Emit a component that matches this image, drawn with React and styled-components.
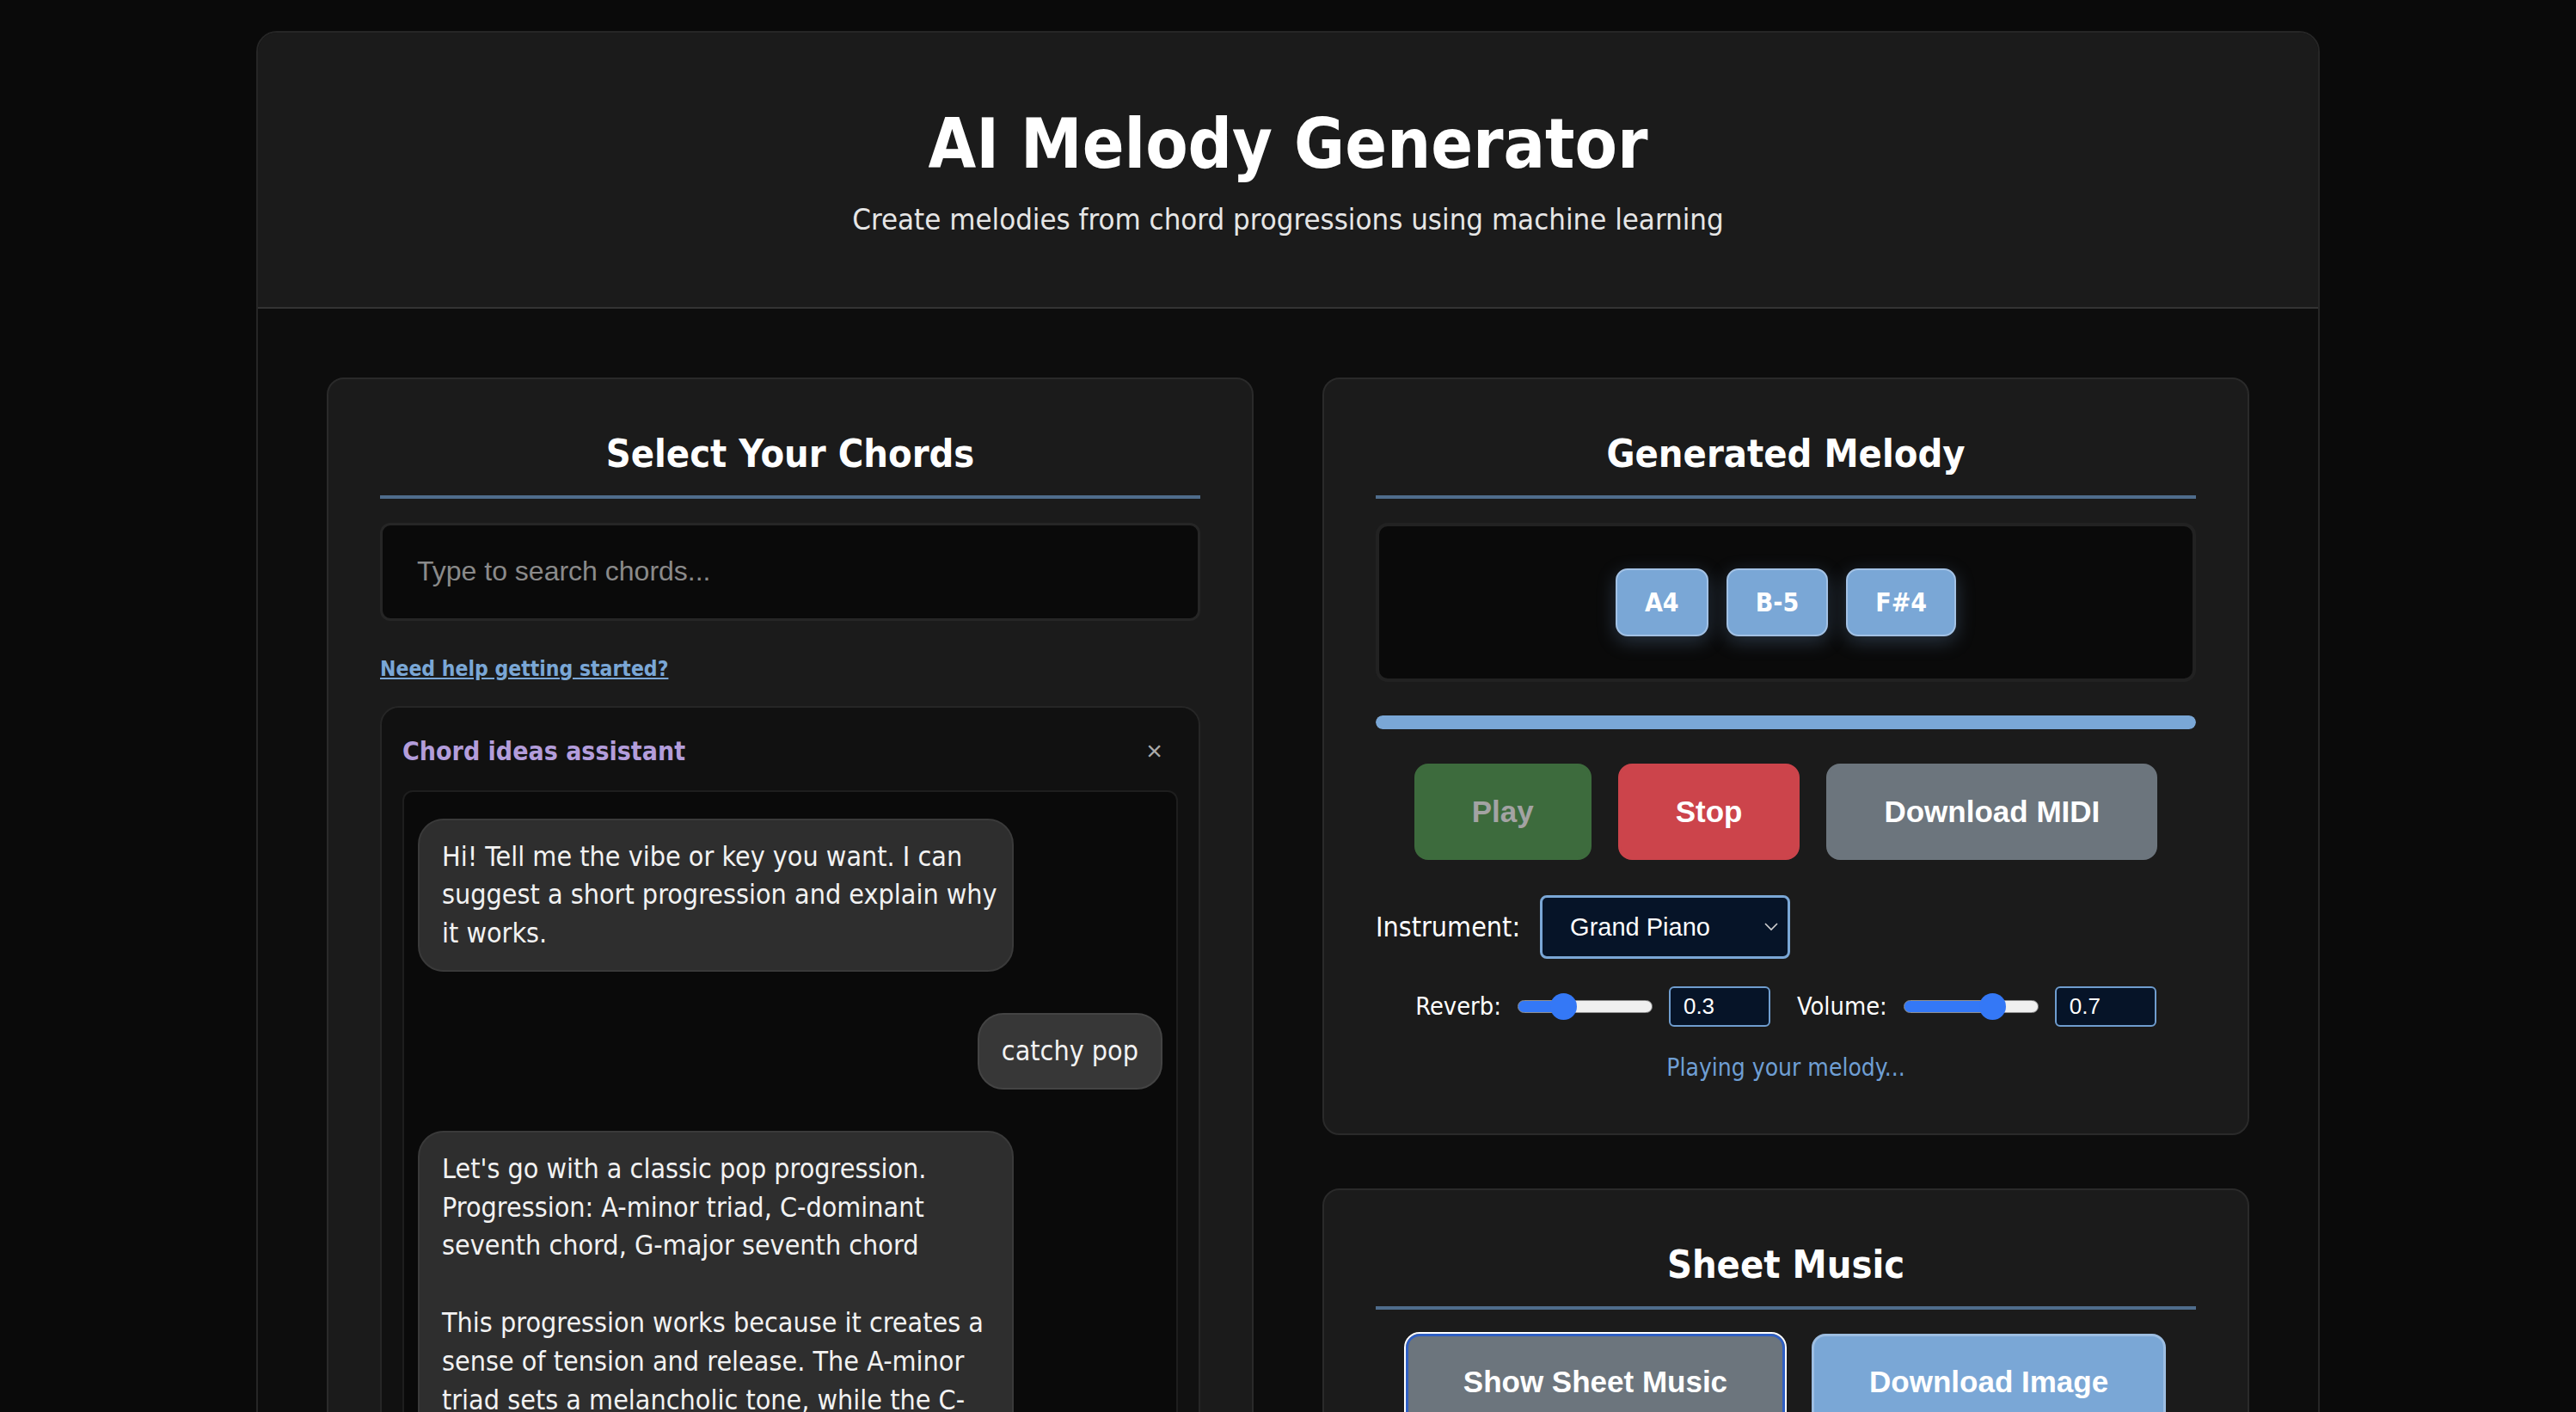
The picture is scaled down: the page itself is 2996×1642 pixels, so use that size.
import React from "react";
import styled, { createGlobalStyle } from "styled-components";

const BODY = `"DejaVu Sans Condensed", "DejaVu Sans", "Liberation Sans", sans-serif`;
const UI = `"Liberation Sans", Arial, sans-serif`;

const Global = createGlobalStyle`
  html, body { margin: 0; padding: 0; background: #0a0a0a; }
  body { font-family: ${BODY}; font-size: 32px; color: #f2f2f2; }
  * { box-sizing: border-box; }
`;

const Page = styled.div`
  padding: 36px 0 80px;
  display: flex;
  justify-content: center;
`;

const Container = styled.div`
  width: 2400px;
  border: 2px solid #262626;
  border-radius: 24px;
  background: #0d0d0d;
  overflow: hidden;
`;

const Header = styled.header`
  background: #1b1b1b;
  border-bottom: 2px solid #333;
  padding: 82px 40px 75px;
  text-align: center;
`;

const Title = styled.h1`
  margin: 0;
  font-size: 80px;
  line-height: 1.2;
  font-weight: 700;
  color: #fff;
`;

const Subtitle = styled.p`
  margin: 14px 0 0;
  font-size: 34.5px;
  line-height: 1.5;
  color: #e6e6e6;
`;

const Main = styled.main`
  display: grid;
  grid-template-columns: 1fr 1fr;
  gap: 80px;
  padding: 80px;
  align-items: start;
`;

const Column = styled.div`
  display: flex;
  flex-direction: column;
  gap: 62px;
`;

const Card = styled.section`
  background: #1b1b1b;
  border: 2px solid #2a2a2a;
  border-radius: 20px;
  padding: 60px 60px 54px;
`;

const CardTitle = styled.h2`
  margin: 0 0 28px;
  padding-bottom: 21px;
  border-bottom: 4px solid #4f6d8c;
  font-size: 44.8px;
  line-height: 1.2;
  font-weight: 700;
  text-align: center;
  color: #fff;
`;

const Search = styled.input`
  display: block;
  width: 100%;
  height: 114px;
  margin-top: 2px;
  padding: 0 40px;
  background: #0a0a0a;
  border: 3px solid #262626;
  border-radius: 12px;
  color: #eee;
  font-family: ${UI};
  font-size: 32px;
  outline: none;
  &::placeholder { color: #8a8a8a; }
`;

const HelpLink = styled.a`
  display: inline-block;
  margin-top: 36px;
  font-size: 24.5px;
  line-height: 1.6;
  font-weight: 700;
  color: #7aa7d6;
  text-decoration: underline;
  cursor: pointer;
`;

const Assistant = styled.div`
  margin-top: 24px;
  background: #111;
  border: 2px solid #262626;
  border-radius: 22px;
  padding: 24px;
`;

const AssistantHead = styled.div`
  height: 54px;
  display: flex;
  align-items: center;
  justify-content: space-between;
  padding-right: 18px;
`;

const AssistantTitle = styled.span`
  font-size: 30px;
  font-weight: 700;
  color: #b39ddb;
`;

const CloseBtn = styled.span`
  font-family: ${UI};
  font-size: 32px;
  color: #aaa;
  cursor: pointer;
`;

const Chat = styled.div`
  margin-top: 18px;
  background: #0a0a0a;
  border: 2px solid #1e1e1e;
  border-radius: 12px;
  padding: 31px 16px;
  display: flex;
  flex-direction: column;
  gap: 48px;
`;

const Bubble = styled.div`
  align-self: ${(p) => (p.$user ? "flex-end" : "flex-start")};
  max-width: 80%;
  padding: ${(p) => (p.$user ? "20px 26px" : "20px 10px 20px 26px")};
  background: ${(p) => (p.$user ? "#373737" : "#2e2e2e")};
  border: 2px solid ${(p) => (p.$user ? "#444" : "#3a3a3a")};
  border-radius: 30px;
  font-size: 32px;
  line-height: 1.4;
  color: #f2f2f2;
  white-space: pre-wrap;
`;

const ChatInputRow = styled.div`
  margin-top: 20px;
  display: flex;
  gap: 16px;
`;

const ChatInput = styled.input`
  flex: 1;
  height: 80px;
  padding: 0 24px;
  background: #0a0a0a;
  border: 2px solid #2a2a2a;
  border-radius: 12px;
  color: #eee;
  font-family: ${UI};
  font-size: 28px;
  &::placeholder { color: #8a8a8a; }
`;

const NotesBox = styled.div`
  height: 185px;
  background: #0a0a0a;
  border: 4px solid #222;
  border-radius: 14px;
  display: flex;
  align-items: center;
  justify-content: center;
  gap: 21px;
`;

const Chip = styled.span`
  height: 79px;
  padding: 0 32px;
  display: inline-flex;
  align-items: center;
  background: #7aa7d6;
  border: 2px solid #a3c2e5;
  border-radius: 14px;
  font-size: 30px;
  font-weight: 700;
  color: #fff;
  box-shadow: 0 6px 22px rgba(122, 167, 214, 0.28);
`;

const Progress = styled.div`
  margin-top: 39px;
  height: 16px;
  border-radius: 8px;
  background: #2a2a2a;
  overflow: hidden;
`;

const ProgressFill = styled.div`
  height: 100%;
  background: #7aa7d6;
  border-radius: 8px;
`;

const ButtonRow = styled.div`
  margin-top: 40px;
  display: flex;
  justify-content: center;
  gap: 31px;
`;

const tones = {
  play: { bg: "#3d6b3d", fg: "#a3a3a3", border: "#3d6b3d" },
  stop: { bg: "#cc444b", fg: "#fff", border: "#cc444b" },
  gray: { bg: "#6c757d", fg: "#fff", border: "#6c757d" },
  blue: { bg: "#7aa7d6", fg: "#fff", border: "#9dbee2" },
};

const Button = styled.button`
  height: 112px;
  padding: 0 64px;
  background: ${(p) => tones[p.$tone].bg};
  color: ${(p) => tones[p.$tone].fg};
  border: 3px solid ${(p) => (p.$focus ? "#2f5fc4" : tones[p.$tone].border)};
  outline: ${(p) => (p.$focus ? "2px solid #fff" : "none")};
  outline-offset: 0;
  border-radius: 16px;
  font-family: ${UI};
  font-size: 35px;
  font-weight: 700;
  cursor: pointer;
`;

const InstrumentRow = styled.div`
  margin-top: 41px;
  display: flex;
  align-items: center;
  gap: 23px;
`;

const Label = styled.label`
  font-size: ${(p) => (p.$small ? "28.8px" : "32px")};
  color: #fff;
`;

const SelectWrap = styled.div`
  position: relative;
  width: 291px;
  height: 74px;
`;

const Select = styled.select`
  appearance: none;
  width: 100%;
  height: 100%;
  padding: 0 40px 0 32px;
  background: #061428;
  border: 3px solid #7aa7d6;
  border-radius: 8px;
  color: #fff;
  font-family: ${UI};
  font-size: 29px;
  outline: none;
`;

const Chevron = styled.svg`
  position: absolute;
  right: 14px;
  top: 50%;
  transform: translateY(-50%);
  pointer-events: none;
`;

const SliderRow = styled.div`
  margin-top: 32px;
  display: flex;
  justify-content: center;
  align-items: center;
  gap: 31px;
`;

const SliderGroup = styled.div`
  display: flex;
  align-items: center;
  gap: 19px;
`;

const Range = styled.input`
  -webkit-appearance: none;
  appearance: none;
  width: 157px;
  height: 15px;
  margin: 0;
  border: 1px solid #8f8f8f;
  border-radius: 8px;
  outline: none;
  &::-webkit-slider-thumb {
    -webkit-appearance: none;
    width: 31px;
    height: 31px;
    border-radius: 50%;
    background: #3478f6;
    border: none;
  }
`;

const NumberBox = styled.input`
  width: 118px;
  height: 47px;
  padding: 0 15px;
  background: #061428;
  border: 2px solid #6f9dcf;
  border-radius: 6px;
  color: #fff;
  font-family: ${UI};
  font-size: 26px;
  outline: none;
  -moz-appearance: textfield;
  &::-webkit-inner-spin-button,
  &::-webkit-outer-spin-button { -webkit-appearance: none; margin: 0; }
`;

const Status = styled.p`
  margin: 26px 0 0;
  text-align: center;
  font-size: 28px;
  line-height: 1.6;
  color: #6f9fd4;
`;

const SheetRow = styled(ButtonRow)`
  margin-top: 0;
`;

function Slider({ label, value }) {
  const pct = ((15.5 + value * 126) / 157) * 100;
  return (
    <SliderGroup>
      <Label $small>{label}</Label>
      <Range
        type="range"
        min="0"
        max="1"
        step="0.1"
        defaultValue={value}
        style={{
          background: `linear-gradient(to right, #3478f6 0%, #3478f6 ${pct}%, #efefef ${pct}%, #efefef 100%)`,
        }}
      />
      <NumberBox type="number" defaultValue={value} step="0.1" />
    </SliderGroup>
  );
}

const messages = [
  {
    user: false,
    text: "Hi! Tell me the vibe or key you want. I can suggest a short progression and explain why it works.",
  },
  { user: true, text: "catchy pop" },
  {
    user: false,
    text:
      "Let's go with a classic pop progression.\nProgression: A-minor triad, C-dominant seventh chord, G-major seventh chord\n\nThis progression works because it creates a sense of tension and release. The A-minor triad sets a melancholic tone, while the C-dominant seventh chord adds tension that resolves nicely into the G-major seventh chord.",
  },
];

export default function App() {
  return (
    <>
      <Global />
      <Page>
        <Container>
          <Header>
            <Title>AI Melody Generator</Title>
            <Subtitle>Create melodies from chord progressions using machine learning</Subtitle>
          </Header>
          <Main>
            <Card>
              <CardTitle>Select Your Chords</CardTitle>
              <Search placeholder="Type to search chords..." />
              <HelpLink>Need help getting started?</HelpLink>
              <Assistant>
                <AssistantHead>
                  <AssistantTitle>Chord ideas assistant</AssistantTitle>
                  <CloseBtn>×</CloseBtn>
                </AssistantHead>
                <Chat>
                  {messages.map((m, i) => (
                    <Bubble key={i} $user={m.user}>
                      {m.text}
                    </Bubble>
                  ))}
                </Chat>
                <ChatInputRow>
                  <ChatInput placeholder="Describe a vibe or key..." />
                  <Button $tone="blue">Send</Button>
                </ChatInputRow>
              </Assistant>
            </Card>
            <Column>
              <Card>
                <CardTitle>Generated Melody</CardTitle>
                <NotesBox>
                  <Chip>A4</Chip>
                  <Chip>B-5</Chip>
                  <Chip>F#4</Chip>
                </NotesBox>
                <Progress>
                  <ProgressFill style={{ width: "100%" }} />
                </Progress>
                <ButtonRow>
                  <Button $tone="play">Play</Button>
                  <Button $tone="stop">Stop</Button>
                  <Button $tone="gray">Download MIDI</Button>
                </ButtonRow>
                <InstrumentRow>
                  <Label>Instrument:</Label>
                  <SelectWrap>
                    <Select defaultValue="piano">
                      <option value="piano">Grand Piano</option>
                      <option value="synth">Synth Lead</option>
                      <option value="guitar">Acoustic Guitar</option>
                    </Select>
                    <Chevron width="16" height="10" viewBox="0 0 16 10">
                      <polyline points="1,1 8,8 15,1" fill="none" stroke="#d0d0d0" strokeWidth="1.6" />
                    </Chevron>
                  </SelectWrap>
                </InstrumentRow>
                <SliderRow>
                  <Slider label="Reverb:" value={0.3} />
                  <Slider label="Volume:" value={0.7} />
                </SliderRow>
                <Status>Playing your melody...</Status>
              </Card>
              <Card>
                <CardTitle>Sheet Music</CardTitle>
                <SheetRow>
                  <Button $tone="gray" $focus>Show Sheet Music</Button>
                  <Button $tone="blue">Download Image</Button>
                </SheetRow>
              </Card>
            </Column>
          </Main>
        </Container>
      </Page>
    </>
  );
}
